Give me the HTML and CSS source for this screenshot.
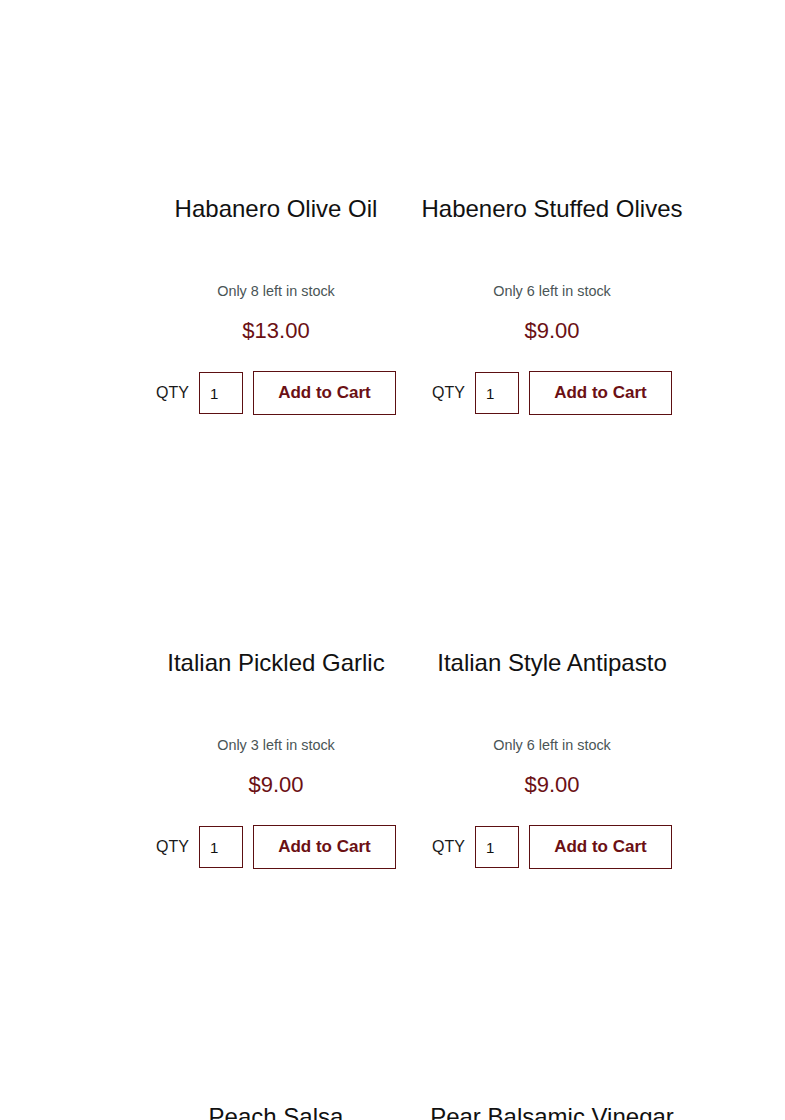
FILE: index.html
```html
<!DOCTYPE html>
<html>
<head>
<meta charset="utf-8">
<link rel="stylesheet" href="styles.css">
</head>
<body>
<div class="products">
  <div class="card">
    <div class="thumb"></div>
    <h2 class="title">Habanero Olive Oil</h2>
    <p class="stock">Only 8 left in stock</p>
    <p class="price">$13.00</p>
    <form class="buy">
      <label class="qty-label">QTY</label>
      <input class="qty" type="text" value="1">
      <button class="add" type="button">Add to Cart</button>
    </form>
  </div>
  <div class="card">
    <div class="thumb"></div>
    <h2 class="title">Habenero Stuffed Olives</h2>
    <p class="stock">Only 6 left in stock</p>
    <p class="price">$9.00</p>
    <form class="buy">
      <label class="qty-label">QTY</label>
      <input class="qty" type="text" value="1">
      <button class="add" type="button">Add to Cart</button>
    </form>
  </div>
  <div class="card">
    <div class="thumb"></div>
    <h2 class="title">Italian Pickled Garlic</h2>
    <p class="stock">Only 3 left in stock</p>
    <p class="price">$9.00</p>
    <form class="buy">
      <label class="qty-label">QTY</label>
      <input class="qty" type="text" value="1">
      <button class="add" type="button">Add to Cart</button>
    </form>
  </div>
  <div class="card">
    <div class="thumb"></div>
    <h2 class="title">Italian Style Antipasto</h2>
    <p class="stock">Only 6 left in stock</p>
    <p class="price">$9.00</p>
    <form class="buy">
      <label class="qty-label">QTY</label>
      <input class="qty" type="text" value="1">
      <button class="add" type="button">Add to Cart</button>
    </form>
  </div>
  <div class="card">
    <div class="thumb"></div>
    <h2 class="title">Peach Salsa</h2>
    <p class="stock">Only 5 left in stock</p>
    <p class="price">$9.00</p>
    <form class="buy">
      <label class="qty-label">QTY</label>
      <input class="qty" type="text" value="1">
      <button class="add" type="button">Add to Cart</button>
    </form>
  </div>
  <div class="card">
    <div class="thumb"></div>
    <h2 class="title">Pear Balsamic Vinegar</h2>
    <p class="stock">Only 4 left in stock</p>
    <p class="price">$13.00</p>
    <form class="buy">
      <label class="qty-label">QTY</label>
      <input class="qty" type="text" value="1">
      <button class="add" type="button">Add to Cart</button>
    </form>
  </div>
</div>
</body>
</html>
```

FILE: styles.css
```css
html, body {
  margin: 0;
  padding: 0;
  background: #ffffff;
}

body {
  font-family: "Liberation Sans", Arial, sans-serif;
  color: #111111;
}

.products {
  display: grid;
  grid-template-columns: 276px 276px;
  padding-left: 138px;
}

.card {
  height: 454px;
  display: flex;
  flex-direction: column;
  align-items: center;
  text-align: center;
}

.thumb {
  height: 195px;
  flex: none;
}

.title {
  margin: 0;
  font-size: 24px;
  line-height: 28px;
  font-weight: normal;
  color: #111111;
  white-space: nowrap;
}

.stock {
  margin: 60px 0 0;
  font-size: 14.4px;
  line-height: 17px;
  color: #4a5556;
}

.price {
  margin: 18px 0 0;
  font-size: 22px;
  line-height: 25px;
  color: #6b1014;
}

.buy {
  margin: 28px 0 0;
  display: flex;
  align-items: center;
  gap: 10px;
}

.qty-label {
  font-size: 16px;
  color: #1a1a1a;
}

.qty {
  box-sizing: border-box;
  width: 44px;
  height: 42px;
  border: 1px solid #5c0f12;
  border-radius: 0;
  padding: 0 0 0 10px;
  font-family: "Liberation Sans", Arial, sans-serif;
  font-size: 15px;
  color: #111111;
  background: #ffffff;
}

.add {
  box-sizing: border-box;
  width: 143px;
  height: 44px;
  border: 1px solid #5c0f12;
  border-radius: 0;
  background: #ffffff;
  font-family: "Liberation Sans", Arial, sans-serif;
  font-size: 17px;
  font-weight: bold;
  color: #6b1014;
  padding: 0;
}
```
